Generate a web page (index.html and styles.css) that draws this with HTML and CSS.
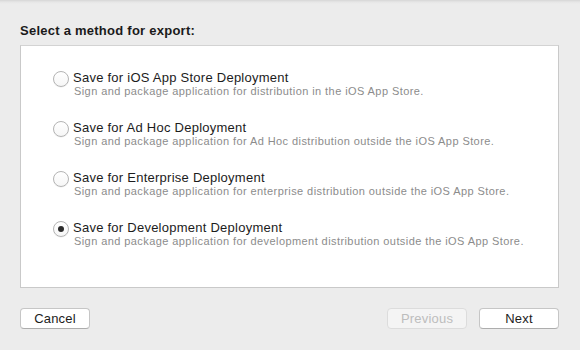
FILE: index.html
```html
<!DOCTYPE html>
<html>
<head>
<meta charset="utf-8">
<link rel="stylesheet" href="styles.css">
</head>
<body>
<div class="sheet">
  <h1 class="heading">Select a method for export:</h1>
  <div class="box">
    <label class="option">
      <span class="radio"></span>
      <span class="text">
        <span class="title">Save for iOS App Store Deployment</span>
        <span class="desc">Sign and package application for distribution in the iOS App Store.</span>
      </span>
    </label>
    <label class="option">
      <span class="radio"></span>
      <span class="text">
        <span class="title">Save for Ad Hoc Deployment</span>
        <span class="desc">Sign and package application for Ad Hoc distribution outside the iOS App Store.</span>
      </span>
    </label>
    <label class="option">
      <span class="radio"></span>
      <span class="text">
        <span class="title">Save for Enterprise Deployment</span>
        <span class="desc">Sign and package application for enterprise distribution outside the iOS App Store.</span>
      </span>
    </label>
    <label class="option">
      <span class="radio checked"></span>
      <span class="text">
        <span class="title">Save for Development Deployment</span>
        <span class="desc">Sign and package application for development distribution outside the iOS App Store.</span>
      </span>
    </label>
  </div>
  <div class="actions">
    <button class="btn cancel">Cancel</button>
    <div class="spacer"></div>
    <button class="btn wide disabled">Previous</button>
    <button class="btn wide">Next</button>
  </div>
</div>
</body>
</html>
```

FILE: styles.css
```css
html, body {
  margin: 0;
  padding: 0;
  width: 580px;
  height: 350px;
  overflow: hidden;
}
body {
  background: linear-gradient(#d6d6d6 0, #e6e6e6 2px, #ececec 4px, #ececec 100%);
  font-family: "Liberation Sans", Arial, sans-serif;
  color: #1c1c1c;
}
.sheet {
  padding: 23px 21px 0 20px;
}
.heading {
  margin: 0 0 6px 0;
  font-size: 13px;
  line-height: 16px;
  font-weight: bold;
  letter-spacing: 0.25px;
  color: #1a1a1a;
}
.box {
  box-sizing: border-box;
  height: 243px;
  background: #fff;
  border: 1px solid #c9c9c9;
  border-top-color: #d3d3d3;
  padding: 25px 0 0 32px;
  display: flex;
  flex-direction: column;
  gap: 24px;
}
.option {
  display: flex;
  align-items: flex-start;
  gap: 4px;
}
.radio {
  box-sizing: border-box;
  width: 16px;
  height: 16px;
  border-radius: 50%;
  border: 1px solid #b4b4b4;
  background: linear-gradient(#ffffff, #f6f6f6);
  box-shadow: 0 0.5px 0.5px rgba(0,0,0,0.08);
  display: flex;
  align-items: center;
  justify-content: center;
  flex: none;
}
.radio.checked::after {
  content: "";
  width: 6px;
  height: 6px;
  border-radius: 50%;
  background: #2b2b2b;
}
.text {
  display: flex;
  flex-direction: column;
}
.title {
  font-size: 13px;
  line-height: 14px;
  letter-spacing: 0.25px;
  color: #1c1c1c;
}
.desc {
  font-size: 11px;
  line-height: 12px;
  letter-spacing: 0.42px;
  color: #8c8c8c;
  padding-left: 1px;
}
.actions {
  display: flex;
  align-items: center;
  gap: 12px;
  margin-top: 20px;
}
.spacer {
  flex: 1;
}
.btn {
  box-sizing: border-box;
  height: 21px;
  width: 70px;
  padding: 0;
  border: 1px solid #c6c6c6;
  border-bottom-color: #adadad;
  border-radius: 4px;
  background: #fff;
  font-family: "Liberation Sans", Arial, sans-serif;
  font-size: 13px;
  line-height: 19px;
  letter-spacing: 0.2px;
  color: #1c1c1c;
}
.btn.wide {
  width: 80px;
}
.btn.disabled {
  background: #f4f4f4;
  color: #bdbdbd;
  border-color: #dcdcdc;
}
```
